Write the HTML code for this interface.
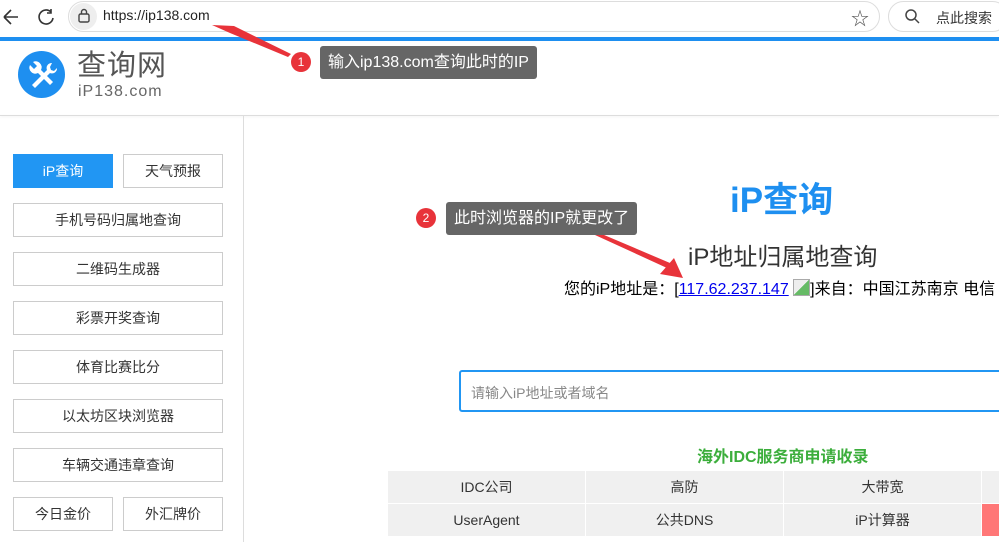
<!DOCTYPE html>
<html><head><meta charset="utf-8"><style>
*{margin:0;padding:0;box-sizing:border-box}
body{width:999px;height:542px;overflow:hidden;background:#fff;font-family:"Liberation Sans","Noto Sans CJK SC",sans-serif;position:relative;color:#333}
.abs{position:absolute}
.btn{position:absolute;border:1px solid #ccc;background:#fff;font-size:14px;color:#333;text-align:center;line-height:32px;height:34px}
table{table-layout:fixed}
td{border:1px solid #fff;background:#f0f0f0;text-align:center;font-size:14px;height:33px;width:198px;color:#333}
.tip{position:absolute;background:#666;color:#fff;font-size:16px;border-radius:3px;height:33px;line-height:33px;padding:0 8px}
.num{position:absolute;width:20px;height:20px;border-radius:50%;background:#e8333a;color:#fff;font-size:12px;text-align:center;line-height:20px}
</style></head><body>
<div class="abs" style="left:0;top:0;width:999px;height:37px;background:#fff"></div>
<svg class="abs" style="left:0;top:6px" width="60" height="22"><path d="M4 11h14M4 11l7-7M4 11l7 7" stroke="#333" stroke-width="1.6" fill="none"/><path d="M51 6a7 7 0 1 0 2 6M51 3v4h-4" stroke="#333" stroke-width="1.6" fill="none"/></svg>
<div class="abs" style="left:68px;top:1px;width:812px;height:31px;border:1px solid #ddd;border-radius:16px;background:#fff"></div>
<div class="abs" style="left:70px;top:3px;width:27px;height:27px;border-radius:50%;background:#eee"></div>
<svg class="abs" style="left:77px;top:8px" width="14" height="16"><rect x="2" y="6" width="10" height="8" rx="1.5" fill="none" stroke="#444" stroke-width="1.4"/><path d="M4.5 6V4a2.5 2.5 0 0 1 5 0v2" fill="none" stroke="#444" stroke-width="1.4"/></svg>
<div class="abs" style="left:103px;top:7px;font-size:14px;color:#222">https://ip138.com</div>
<div class="abs" style="left:851px;top:5px;font-size:18px;color:#555">☆</div>
<div class="abs" style="left:888px;top:1px;width:120px;height:31px;border:1px solid #ddd;border-radius:16px"></div>
<svg class="abs" style="left:904px;top:8px" width="16" height="16"><circle cx="7" cy="7" r="5" fill="none" stroke="#444" stroke-width="1.5"/><path d="M11 11l4 4" stroke="#444" stroke-width="1.5"/></svg>
<div class="abs" style="left:936px;top:8px;font-size:14px;color:#333">点此搜索</div>
<div class="abs" style="left:0;top:37px;width:999px;height:4px;background:#1e8ff0"></div>
<div class="abs" style="left:0;top:115px;width:999px;height:1px;background:#ddd;box-shadow:0 1px 2px #eee"></div>
<svg class="abs" style="left:18px;top:51px" width="47" height="47"><circle cx="23.5" cy="23.5" r="23.5" fill="#1e8ff0"/><path d="M12 14a6 6 0 0 0 8 8l12 12 3-3-12-12a6 6 0 0 0-8-8l4 4-3 3z" fill="#fff"/><path d="M34 12a5 5 0 0 0-5 7l-15 15 3 3 15-15a5 5 0 0 0 7-5l-3 3-3-1-1-3z" fill="#fff"/></svg>
<div class="abs" style="left:77px;top:51px;font-size:29px;line-height:30px;color:#555;letter-spacing:1px">查询网</div>
<div class="abs" style="left:78px;top:84px;font-size:16px;line-height:16px;color:#666;letter-spacing:1px">iP138.com</div>
<div class="abs" style="left:243px;top:116px;width:1px;height:426px;background:#ddd"></div>
<div class="btn" style="left:13px;top:154px;width:100px;background:#2196f3;border-color:#2196f3;color:#fff">iP查询</div>
<div class="btn" style="left:123px;top:154px;width:100px">天气预报</div>
<div class="btn" style="left:13px;top:203px;width:210px">手机号码归属地查询</div>
<div class="btn" style="left:13px;top:252px;width:210px">二维码生成器</div>
<div class="btn" style="left:13px;top:301px;width:210px">彩票开奖查询</div>
<div class="btn" style="left:13px;top:350px;width:210px">体育比赛比分</div>
<div class="btn" style="left:13px;top:399px;width:210px">以太坊区块浏览器</div>
<div class="btn" style="left:13px;top:448px;width:210px">车辆交通违章查询</div>
<div class="btn" style="left:13px;top:497px;width:100px">今日金价</div>
<div class="btn" style="left:123px;top:497px;width:100px">外汇牌价</div>
<div class="abs" style="left:730px;top:172px;font-size:35px;font-weight:bold;color:#1e8ff0">iP查询</div>
<div class="abs" style="left:688px;top:237px;font-size:24px;color:#333">iP地址归属地查询</div>
<div class="abs" style="left:564px;top:275px;font-size:16px;color:#000;white-space:nowrap">您的iP地址是：[<span style="color:#00e;text-decoration:underline">117.62.237.147</span> <span style="display:inline-block;width:17px;height:17px;border:1px solid #aaa;background:linear-gradient(135deg,#eee 50%,#6b6 50%);vertical-align:-2px"></span>]来自：中国江苏南京 电信</div>
<div class="abs" style="left:459px;top:370px;width:560px;height:42px;border:2px solid #2196f3;border-radius:3px"></div>
<div class="abs" style="left:471px;top:383px;font-size:14px;color:#888">请输入iP地址或者域名</div>
<div class="abs" style="left:697px;top:443px;font-size:16px;font-weight:bold;color:#3cae3c">海外IDC服务商申请收录</div>
<table class="abs" style="left:387px;top:470px;border-collapse:collapse;width:630px">
<tr><td>IDC公司</td><td>高防</td><td>大带宽</td><td style="width:36px"></td></tr>
<tr><td>UserAgent</td><td>公共DNS</td><td>iP计算器</td><td style="width:36px;background:#f77"></td></tr>
</table>
<svg class="abs" style="left:0;top:0" width="999" height="542"><path d="M212 25L234 26L291 54L288 57L230 33Z" fill="#e8333a"/><path d="M595 235L597 232L670 263L667 268Z" fill="#e8333a"/><path d="M683 278L660 274L674 258Z" fill="#e8333a"/></svg>
<div class="num" style="left:291px;top:52px">1</div>
<div class="tip" style="left:320px;top:46px">输入ip138.com查询此时的IP</div>
<div class="num" style="left:416px;top:208px">2</div>
<div class="tip" style="left:446px;top:202px">此时浏览器的IP就更改了</div>
</body></html>
